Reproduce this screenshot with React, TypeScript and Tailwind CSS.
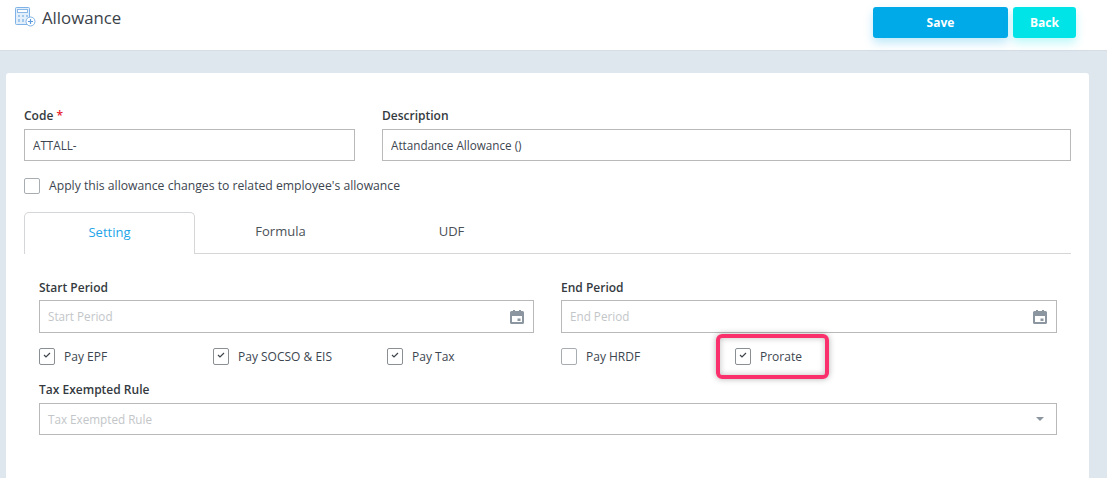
function CheckBox({ checked, label }: { checked: boolean; label: string }) {
  return (
    <div className="flex w-[174px] items-center">
      <span className={`flex h-[17px] w-4 items-center justify-center rounded-[2px] border bg-white ${checked ? 'border-[#8a8f94]' : 'border-[#a8adb2]'}`}>
        {checked && (
          <svg width="8" height="6" viewBox="0 0 8 6" fill="none" className="-mt-[3px]">
            <path d="M1 3l2 2 4-4" stroke="#3f454b" strokeWidth="1.2" />
          </svg>
        )}
      </span>
      <span className="ml-[9px] text-[12px] text-[#3d4650]">{label}</span>
    </div>
  );
}

function CalendarIcon() {
  return (
    <svg width="14" height="14" viewBox="0 0 14 14">
      <path fillRule="evenodd" fill="#8c96a0" d="M1.5 1H3V0h2v1h4V0h2v1h1.5A1.5 1.5 0 0 1 14 2.5v10a1.5 1.5 0 0 1-1.5 1.5h-11A1.5 1.5 0 0 1 0 12.5v-10A1.5 1.5 0 0 1 1.5 1zM2 6v6h10V6H2zm5.5 2.5h3v2.5h-3V8.5z" />
    </svg>
  );
}

function FieldLabel({ children }: { children: React.ReactNode }) {
  return <div className="h-[18px] text-[12px] leading-[18px] font-semibold text-[#343a40]">{children}</div>;
}

function PickerField({ label, className }: { label: string; className: string }) {
  return (
    <div className={className}>
      <FieldLabel>{label}</FieldLabel>
      <div className="mt-[3px] flex h-[33px] items-center justify-between border border-[#b9b9b9] pr-[9px] pl-2">
        <span className="text-[11.7px] text-[#c3c6c9]">{label}</span>
        <CalendarIcon />
      </div>
    </div>
  );
}

export default function App() {
  return (
    <div className="h-[478px] w-[1107px] overflow-hidden bg-[#dee6ee] font-['Open_Sans',sans-serif]">
      {/* Header */}
      <div className="flex h-[51px] items-start justify-between border-b border-[#d6dde4] bg-white pt-[7px] pr-[31px] pl-[15px]">
        <div className="flex items-center">
          <svg width="21" height="20" viewBox="0 0 21 20" fill="none" className="self-start">
            <rect x="0.5" y="0.5" width="14" height="17" rx="1" fill="#e3effb" stroke="#7fb2e6" />
            <rect x="2.5" y="2.5" width="10" height="3" fill="#fff" stroke="#8ab8e8" />
            <path d="M3 8h2v2H3zM7 8h2v2H7zM3 12h2v3H3zM7 12h2v3H7zM11 8h2v2h-2z" fill="#a3c8ee" />
            <circle cx="15.5" cy="14.5" r="4.5" fill="#fff" stroke="#7fb2e6" />
            <path d="M13 14.5h5M15.5 12v5" stroke="#5d9bdd" strokeWidth="1.2" />
          </svg>
          <span className="ml-[6px] text-[16.8px] leading-[22px] text-[#3b4249]">Allowance</span>
        </div>
        <div className="flex gap-[5px]">
          <button className="h-[31px] w-[135px] rounded-[3px] bg-[#00a9e8] text-[12px] font-bold text-white shadow-[0_5px_10px_rgba(0,169,232,0.25)]">
            Save
          </button>
          <button className="h-[31px] w-[63px] rounded-[3px] bg-[#00e4e8] text-[12px] font-bold text-white shadow-[0_5px_10px_rgba(0,228,232,0.25)]">
            Back
          </button>
        </div>
      </div>

      {/* Card */}
      <div className="mt-[22px] mr-[18px] ml-[6px] h-[420px] rounded-[3px] bg-white px-[18px] pt-[34px]">
        <div className="flex gap-[27px]">
          <div className="w-[331px]">
            <FieldLabel>
              Code <span className="text-[#e8192c]">*</span>
            </FieldLabel>
            <input
              readOnly
              value="ATTALL-"
              className="mt-[4px] h-[32px] w-full border border-[#b9b9b9] px-2 text-[11.7px] text-[#3d4650] outline-none"
            />
          </div>
          <div className="flex-1">
            <FieldLabel>Description</FieldLabel>
            <input
              readOnly
              value="Attandance Allowance ()"
              className="mt-[4px] h-[32px] w-full border border-[#b9b9b9] px-2 text-[11.7px] text-[#3d4650] outline-none"
            />
          </div>
        </div>

        <div className="mt-[16px] flex items-center">
          <span className="h-4 w-4 rounded-[2px] border border-[#a8adb2] bg-white" />
          <span className="ml-[9px] text-[12.2px] text-[#3d4650]">Apply this allowance changes to related employee's allowance</span>
        </div>

        {/* Tabs */}
        <div className="mt-[17px] flex h-[42px] border-b border-[#d4d6d8] text-[13px]">
          <div className="-mb-px flex w-[171px] items-center justify-center rounded-t-[5px] border border-b-0 border-[#d4d6d8] bg-white pb-[3px] text-[#1da5e8]">
            Setting
          </div>
          <div className="flex w-[171px] items-center justify-center pb-[2px] text-[#4a5157]">Formula</div>
          <div className="flex w-[171px] items-center justify-center pb-[2px] text-[#4a5157]">UDF</div>
        </div>

        <div className="pt-[25px] pr-[14px] pl-[15px]">
          <div className="flex gap-[27px]">
            <PickerField label="Start Period" className="w-[495px]" />
            <PickerField label="End Period" className="flex-1" />
          </div>

          <div className="relative mt-[15px] flex h-[17px] items-center">
            <CheckBox checked label="Pay EPF" />
            <CheckBox checked label="Pay SOCSO & EIS" />
            <CheckBox checked label="Pay Tax" />
            <CheckBox checked={false} label="Pay HRDF" />
            <CheckBox checked label="Prorate" />
            {/* highlight drawn over the form */}
            <div className="absolute top-[-14px] left-[677px] h-[45px] w-[113px] rounded-[6px] border-[4px] border-[#f9306b] shadow-[0_0_6px_rgba(0,0,0,0.3),inset_0_0_6px_rgba(0,0,0,0.25)]" />
          </div>

          <div className="mt-[16px]">
            <FieldLabel>Tax Exempted Rule</FieldLabel>
            <div className="mt-[4px] flex h-[32px] items-center justify-between border border-[#b9b9b9] pr-[12px] pl-2">
              <span className="text-[11.7px] text-[#c3c6c9]">Tax Exempted Rule</span>
              <span className="h-0 w-0 border-x-[4px] border-t-[4px] border-x-transparent border-t-[#8c96a0]" />
            </div>
          </div>
        </div>
      </div>
    </div>
  );
}
